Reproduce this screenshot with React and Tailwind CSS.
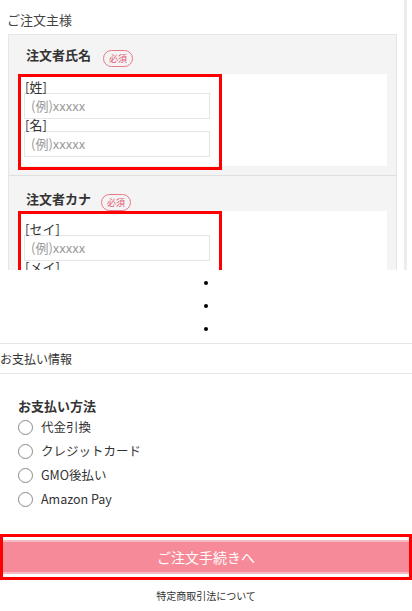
const font = { fontFamily: '"Noto Sans CJK JP", "Noto Sans", sans-serif' };

function Badge() {
  return (
    <span className="inline-flex items-center justify-center w-[30px] h-[17px] rounded-full border border-[#e8798a] text-[9px] leading-none text-[#e35a70]">
      必須
    </span>
  );
}

function Field({ label }) {
  return (
    <>
      <div className="pl-[4px] text-[13px] leading-[12px] text-[#333]">{label}</div>
      <div className="ml-[3px] w-[186px] h-[26px] border border-[#e6e6e6] bg-white flex items-center pl-[6px] text-[13px] text-[#9a9a9a]">
        (例)xxxxx
      </div>
    </>
  );
}

function Radio({ label }) {
  return (
    <div className="flex items-center h-[24px]">
      <span className="w-[15px] h-[15px] rounded-full border border-[#888] bg-white" />
      <span className="ml-[8px] text-[12.5px] text-[#333]">{label}</span>
    </div>
  );
}

export default function App() {
  return (
    <div className="w-[412px] h-[611px] bg-white overflow-hidden" style={font}>
      {/* order form (cut off) */}
      <div className="w-[407px] h-[270px] overflow-hidden border-r-[3px] border-[#ececec]">
        <div className="pt-[10px] pl-[7px] h-[34px] text-[13px] text-[#444]">ご注文主様</div>
        <div className="ml-[8px] w-[389px] bg-[#f4f4f4] border border-[#e6e6e6]">
          {/* 氏名 */}
          <div className="px-[9px] pb-[9px] border-b border-[#dedede]">
            <div className="flex items-center h-[39px] pt-[1px] pl-[8px]">
              <span className="text-[13px] font-bold text-[#333]">注文者氏名</span>
              <span className="ml-[12px]"><Badge /></span>
            </div>
            <div className="bg-white h-[92px]">
              <div className="w-[204px] h-[96px] border-[3px] border-[#ff0000] pt-[4px]">
                <Field label="[姓]" />
                <Field label="[名]" />
              </div>
            </div>
          </div>
          {/* カナ */}
          <div className="px-[9px]">
            <div className="flex items-center h-[35px] pt-[10px] pl-[8px]">
              <span className="text-[13px] font-bold text-[#333]">注文者カナ</span>
              <span className="ml-[10px]"><Badge /></span>
            </div>
            <div className="bg-white h-[80px] mt-[2px]">
              <div className="w-[204px] h-[96px] -mt-[2px] border-[3px] border-[#ff0000] pt-[9px]">
                <Field label="[セイ]" />
                <Field label="[メイ]" />
              </div>
            </div>
          </div>
        </div>
      </div>

      {/* list bullets */}
      <div className="flex flex-col items-center pt-[11px] gap-[19px] h-[73px]">
        <span className="w-[4px] h-[4px] rounded-full bg-black" />
        <span className="w-[4px] h-[4px] rounded-full bg-black" />
        <span className="w-[4px] h-[4px] rounded-full bg-black" />
      </div>

      {/* payment */}
      <div className="h-[31px] border-y border-[#e6e6e6] flex items-center text-[12px] text-[#333]">
        お支払い情報
      </div>
      <div className="pl-[18px] pt-[23px]">
        <div className="text-[13px] font-bold text-[#333] leading-[18px]">お支払い方法</div>
        <Radio label="代金引換" />
        <Radio label="クレジットカード" />
        <Radio label="GMO後払い" />
        <Radio label="Amazon Pay" />
      </div>

      {/* submit */}
      <div className="mt-[23px] h-[46px] border-[3px] border-[#ff0000] bg-white flex flex-col justify-center">
        <button className="w-full h-[34px] bg-[#f78a98] border-y-2 border-[#f5b9c2] text-white text-[14px]">
          ご注文手続きへ
        </button>
      </div>
      <div className="pt-[8px] text-center text-[10px] text-[#333]">特定商取引法について</div>
    </div>
  );
}
